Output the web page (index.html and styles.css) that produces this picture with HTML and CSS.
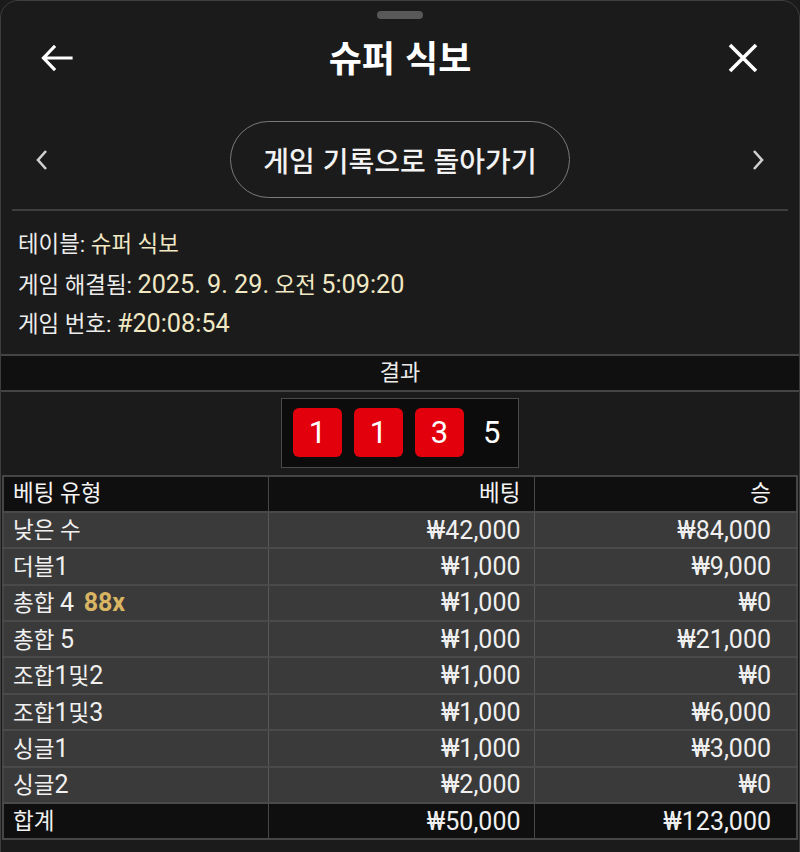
FILE: index.html
```html
<!DOCTYPE html>
<html lang="ko">
<head>
<meta charset="utf-8">
<title>슈퍼 식보</title>
<link rel="stylesheet" href="styles.css">
</head>
<body>
<div class="sheet">
  <div class="handle"></div>
  <div class="topbar">
    <span class="icon-btn">
      <svg width="32" height="26" viewBox="0 0 32 26"><path d="M30 13H3M13 2L2.5 13 13 24" fill="none" stroke="#fff" stroke-width="3.2" stroke-linecap="square"/></svg>
    </span>
    <h1 class="title">슈퍼 식보</h1>
    <span class="icon-btn">
      <svg width="32" height="32" viewBox="0 0 32 32"><path d="M3 3L29 29M29 3L3 29" fill="none" stroke="#fff" stroke-width="3.6"/></svg>
    </span>
  </div>
  <div class="navrow">
    <span class="chev">
      <svg width="14" height="22" viewBox="0 0 14 22"><path d="M11 2L3 11l8 9" fill="none" stroke="#d0d0d0" stroke-width="2.6"/></svg>
    </span>
    <button class="back-btn">게임 기록으로 돌아가기</button>
    <span class="chev">
      <svg width="14" height="22" viewBox="0 0 14 22"><path d="M3 2l8 9-8 9" fill="none" stroke="#d0d0d0" stroke-width="2.6"/></svg>
    </span>
  </div>
  <div class="divider"></div>
  <div class="info">
    <div class="info-line">테이블: <span class="val">슈퍼 식보</span></div>
    <div class="info-line">게임 해결됨: <span class="val"><span class="n">2025. 9. 29.</span> 오전 <span class="n">5:09:20</span></span></div>
    <div class="info-line">게임 번호: <span class="val n">#20:08:54</span></div>
  </div>
  <div class="results">
    <div class="res-head">결과</div>
    <div class="res-body">
      <div class="dice-box">
        <span class="die">1</span>
        <span class="die">1</span>
        <span class="die">3</span>
        <span class="sum">5</span>
      </div>
    </div>
  </div>
  <table class="bets">
    <thead>
      <tr><th class="c1">베팅 유형</th><th class="c2">베팅</th><th class="c3">승</th></tr>
    </thead>
    <tbody>
      <tr><td class="c1">낮은 수</td><td class="c2">₩42,000</td><td class="c3">₩84,000</td></tr>
      <tr><td class="c1">더블<span class="n">1</span></td><td class="c2">₩1,000</td><td class="c3">₩9,000</td></tr>
      <tr><td class="c1">총합 <span class="n">4</span> <span class="mult">88x</span></td><td class="c2">₩1,000</td><td class="c3">₩0</td></tr>
      <tr><td class="c1">총합 <span class="n">5</span></td><td class="c2">₩1,000</td><td class="c3">₩21,000</td></tr>
      <tr><td class="c1">조합<span class="n">1</span>및<span class="n">2</span></td><td class="c2">₩1,000</td><td class="c3">₩0</td></tr>
      <tr><td class="c1">조합<span class="n">1</span>및<span class="n">3</span></td><td class="c2">₩1,000</td><td class="c3">₩6,000</td></tr>
      <tr><td class="c1">싱글<span class="n">1</span></td><td class="c2">₩1,000</td><td class="c3">₩3,000</td></tr>
      <tr><td class="c1">싱글<span class="n">2</span></td><td class="c2">₩2,000</td><td class="c3">₩0</td></tr>
    </tbody>
    <tfoot>
      <tr><td class="c1">합계</td><td class="c2">₩50,000</td><td class="c3">₩123,000</td></tr>
    </tfoot>
  </table>
  <div class="tail"></div>
</div>
</body>
</html>
```
FILE: styles.css
```css
* { box-sizing: border-box; }
html, body {
  margin: 0;
  padding: 0;
  background: #1b1b1b;
}
body {
  font-family: Roboto, "Noto Sans CJK KR", sans-serif;
  color: #f2f2f2;
  overflow: hidden;
}
.sheet {
  width: 800px;
  min-height: 860px;
  background: #1b1b1b;
  border: 1px solid #3e3e3e;
  border-radius: 18px 18px 0 0;
  overflow: hidden;
}
.handle {
  width: 46px;
  height: 8px;
  margin: 10px auto 0;
  border-radius: 4px;
  background: #595959;
}
.topbar {
  height: 64px;
  margin-top: 7px;
  display: flex;
  align-items: center;
  justify-content: space-between;
  padding: 0 39px 0 39px;
}
.icon-btn {
  display: flex;
  align-items: center;
  width: 34px;
  justify-content: center;
}
.title {
  margin: 0;
  font-family: "Noto Sans CJK KR", sans-serif;
  font-size: 36px;
  font-weight: 700;
  color: #fff;
  line-height: 1;
  position: relative;
  top: -2px;
}
.navrow {
  margin-top: 31px;
  display: flex;
  align-items: center;
  justify-content: space-between;
  padding: 0 34px 0 34px;
}
.chev { display: flex; width: 14px; }
.back-btn {
  height: 77px;
  width: 340px;
  border: 1.5px solid #7a7a7a;
  border-radius: 40px;
  background: transparent;
  color: #f2f2f2;
  font-family: "Noto Sans CJK KR", sans-serif;
  font-size: 28px;
  font-weight: 500;
  padding: 0;
}
.divider {
  margin: 11px 11px 0;
  height: 2px;
  background: #3e3e3e;
}
.info {
  padding: 14px 17px 10px;
}
.info-line {
  height: 39.5px;
  line-height: 39.5px;
  font-size: 22.4px;
  color: #ececec;
  white-space: nowrap;
}
.n { font-size: 25px; }
.info .n { font-size: 25.2px; }
.val { color: #f1e8c4; }
.results {
  border-top: 2px solid #444;
}
.res-head {
  background: #101010;
  height: 36px;
  line-height: 34px;
  text-align: center;
  font-size: 22px;
  color: #ececec;
  border-bottom: 2px solid #444;
}
.res-body {
  display: flex;
  justify-content: center;
  padding: 6px 0 6px;
  height: 83px;
}
.dice-box {
  width: 238px;
  height: 70px;
  background: #0c0c0c;
  border: 1.5px solid #4a4a4a;
  display: flex;
  align-items: center;
  gap: 12px;
  padding: 0 11px;
}
.die {
  width: 49px;
  height: 49px;
  border-radius: 6px;
  background: #e3000d;
  color: #fff;
  font-size: 31px;
  display: flex;
  align-items: center;
  justify-content: center;
}
.sum {
  font-size: 31px;
  color: #fff;
  margin-left: 7px;
}
.bets {
  width: 796px;
  margin-left: 1px;
  border-collapse: collapse;
  table-layout: fixed;
  border: 2px solid #454545;
}
.bets th, .bets td {
  height: 36.4px;
  padding: 0 13px 0 9px;
  font-size: 22.5px;
  font-weight: 400;
  white-space: nowrap;
  line-height: 1;
}
.bets th {
  background: #0f0f0f;
  color: #f4f4f4;
  border: 1.5px solid #474747;
}
.bets td {
  background: #3a3a3a;
  color: #f0f0f0;
  border-top: 2px solid #4a4a4a;
  border-bottom: 2px solid #4a4a4a;
  border-left: 1px solid #575757;
  border-right: 1px solid #575757;
}
.bets tfoot td {
  background: #0f0f0f;
  border-color: #474747;
}
.c1 { text-align: left; width: 265px; }
.c2 { text-align: right; width: 266px; }
.c3 { text-align: right; }
.bets td.c2, .bets td.c3 { font-size: 25px; }
.bets .c3 { padding-right: 25px; }
.mult {
  color: #d9b462;
  font-weight: 700;
  font-size: 25px;
  margin-left: 4px;
}
.tail {
  height: 20px;
  background: #1b1b1b;
}
```
